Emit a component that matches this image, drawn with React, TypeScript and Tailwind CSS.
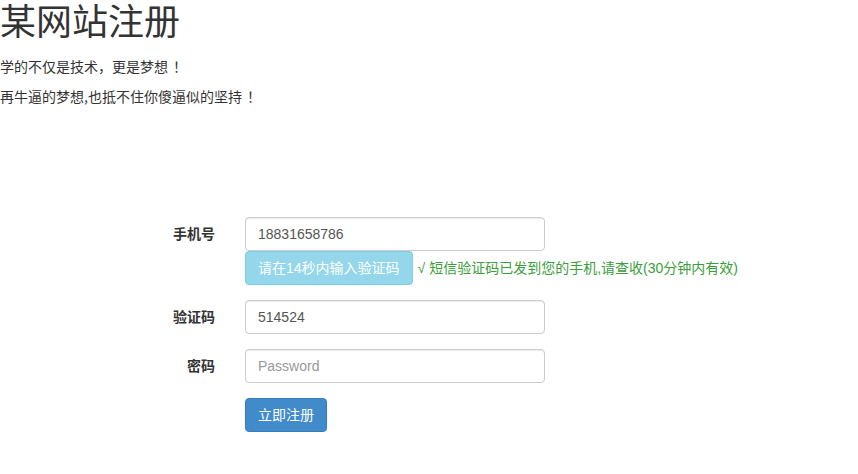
import React, { useState } from "react";

const font = "font-['Liberation_Sans','Noto_Sans_CJK_SC',sans-serif]";
const cjkFont = "font-['Noto_Sans_CJK_SC','Liberation_Sans',sans-serif]";

const inputClass =
  "block h-[34px] w-[300px] rounded-[4px] border border-[#ccc] bg-white px-3 text-[14px] text-[#555] shadow-[inset_0_1px_1px_rgba(0,0,0,0.075)] outline-none placeholder:text-[#999]";

// 전각 문장부호 한 칸 (폭 14px 고정)
const Punct: React.FC<{ ch: string; center?: boolean }> = ({ ch, center }) => (
  <span className={`inline-block w-[14px] whitespace-nowrap ${center ? "pl-[5px]" : ""}`}>{ch}</span>
);

interface RowProps {
  label: string;
  children: React.ReactNode;
}

// 표 한 줄: 오른쪽 정렬 라벨 + 입력칸
const Row: React.FC<RowProps> = ({ label, children }) => (
  <div className="mb-[15px] flex">
    <label className="w-[215px] pt-[7px] text-right text-[14px] font-bold leading-[20px] text-[#333]">
      {label}
    </label>
    <div className="ml-[30px]">{children}</div>
  </div>
);

export default function App() {
  const [phone, setPhone] = useState("18831658786");
  const [code, setCode] = useState("514524");
  const [password, setPassword] = useState("");

  return (
    <div className={`${font} min-h-[474px] bg-white text-[14px] leading-[20px] text-[#333]`}>
      {/* 머리말 */}
      <h1 className="m-0 pt-[3px] text-[36px] font-normal leading-[1.1]">某网站注册</h1>
      <p className={`${cjkFont} mb-[10px] mt-[13px]`}>
        学的不仅是技术
        <Punct ch="，" />
        更是梦想
        <Punct ch="！" center />
      </p>
      <p className={`${cjkFont} m-0`}>
        再牛逼的梦想,也抵不住你傻逼似的坚持
        <Punct ch="！" center />
      </p>

      {/* 가입 폼 */}
      <form className="mt-[111px]" onSubmit={(e) => e.preventDefault()}>
        <Row label="手机号">
          <input className={inputClass} value={phone} onChange={(e) => setPhone(e.target.value)} />
          <div className="flex items-center">
            <button
              type="button"
              disabled
              className="h-[34px] rounded-[4px] border border-[#7ccde5] bg-[#94d6ea] px-3 text-[14px] text-white"
            >
              请在14秒内输入验证码
            </button>
            <span className="ml-[5px] text-[#3a9e3a]">√ 短信验证码已发到您的手机,请查收(30分钟内有效)</span>
          </div>
        </Row>
        <Row label="验证码">
          <input className={inputClass} value={code} onChange={(e) => setCode(e.target.value)} />
        </Row>
        <Row label="密码">
          <input
            type="password"
            placeholder="Password"
            className={inputClass}
            value={password}
            onChange={(e) => setPassword(e.target.value)}
          />
        </Row>
        <div className="flex">
          <div className="ml-[245px]">
            <button
              type="submit"
              className="h-[34px] rounded-[4px] border border-[#357ebd] bg-[#428bca] px-3 text-[14px] text-white"
            >
              立即注册
            </button>
          </div>
        </div>
      </form>
    </div>
  );
}
